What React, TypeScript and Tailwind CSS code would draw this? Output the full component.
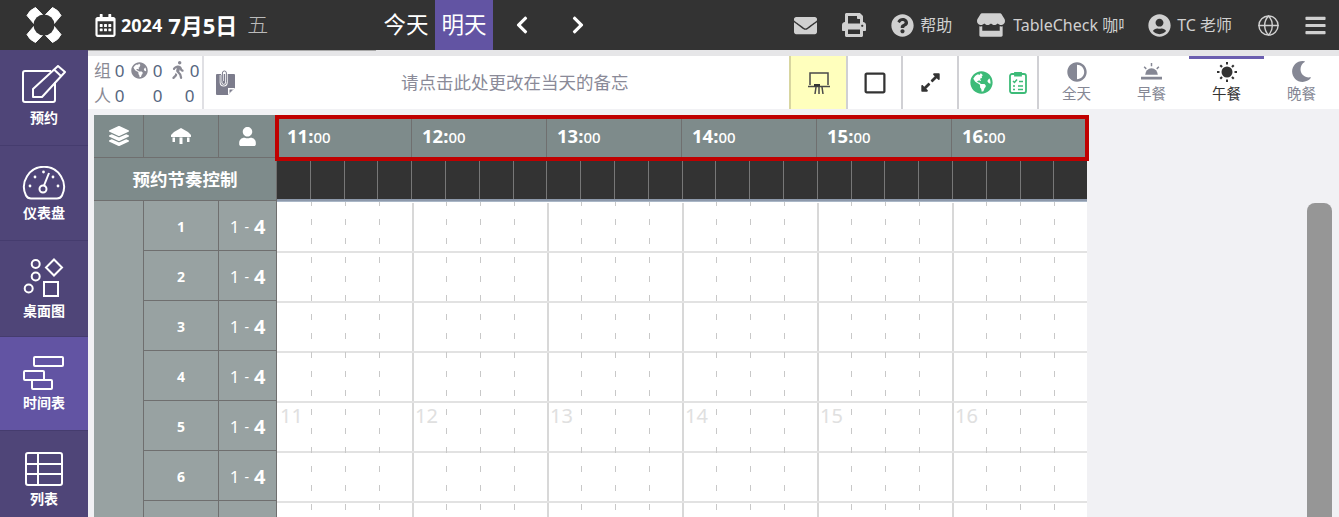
import {
  FaAdjust,
  FaBars,
  FaChevronLeft,
  FaChevronRight,
  FaEnvelope,
  FaExpandAlt,
  FaGlobeAmericas,
  FaLayerGroup,
  FaMoon,
  FaPrint,
  FaQuestionCircle,
  FaRegCalendarAlt,
  FaRegSquare,
  FaStore,
  FaUser,
  FaUserCircle,
  FaWalking,
} from 'react-icons/fa';
import { Globe } from 'lucide-react';

const HOURS = [11, 12, 13, 14, 15, 16];
const ROWS = [1, 2, 3, 4, 5, 6, 7];
const TICKS = Array.from({ length: 24 }, (_, i) => i);

function LogoMark() {
  return (
    <svg viewBox="-18 -18 36 36" className="h-[36px] w-[36px]">
      <g fill="#fff" stroke="#fff" strokeWidth="1" strokeLinejoin="round">
        <path d="M-17 -9.500Q-14.500 -15 -8.500 -17.500L-1.200 -10L-10 -1.200z" />
        <path d="M17 -9.500Q14.500 -15 8.500 -17.500L1.200 -10L10 -1.200z" />
        <path d="M-17 9.500Q-14.500 15 -8.500 17.500L-1.200 10L-10 1.200z" />
        <path d="M17 9.500Q14.500 15 8.500 17.500L1.200 10L10 1.200z" />
      </g>
      <circle cx="0" cy="0" r="10.500" fill="#333" />
    </svg>
  );
}

function NavIcon({ name }: { name: string }) {
  if (name === 'edit') {
    return (
      <svg viewBox="0 0 44 40" className="h-[40px] w-[44px]" fill="none" stroke="#fff" strokeWidth="2" strokeLinejoin="round">
        <path d="M29 6H3a2 2 0 0 0-2 2v27a2 2 0 0 0 2 2h28a2 2 0 0 0 2-2V17" />
        <path d="M11 32v-8L36 1l7 6-23 25z" />
        <path d="M32 4.500l7 6.500" />
      </svg>
    );
  }
  if (name === 'gauge') {
    return (
      <svg viewBox="0 0 44 34" className="h-[34px] w-[44px]" fill="none" stroke="#fff" strokeWidth="2">
        <path d="M9 32.500C6 32.500 5 31.500 4 29.500A20 20 0 1 1 40 29.500C39 31.500 38 32.500 35 32.500z" />
        <circle cx="21" cy="23" r="3.500" />
        <path d="M22 19.500L27 7" />
        <g fill="#fff" stroke="none">
          <circle cx="8" cy="20" r="1.400" />
          <circle cx="13" cy="11" r="1.400" />
          <circle cx="21.500" cy="6" r="1.400" />
          <circle cx="31" cy="11" r="1.400" />
          <circle cx="36" cy="20" r="1.400" />
        </g>
      </svg>
    );
  }
  if (name === 'shapes') {
    return (
      <svg viewBox="0 0 42 40" className="h-[40px] w-[42px]" fill="none" stroke="#fff" strokeWidth="2">
        <circle cx="12.700" cy="6" r="4" />
        <circle cx="12.700" cy="18.500" r="4" />
        <circle cx="5.700" cy="30.500" r="4" />
        <path d="M31 1.500l8 8-8 8-8-8z" />
        <rect x="21" y="24" width="14" height="14" />
      </svg>
    );
  }
  if (name === 'gantt') {
    return (
      <svg viewBox="0 0 42 34" className="h-[34px] w-[42px]" fill="none" stroke="#fff" strokeWidth="2">
        <rect x="11" y="1" width="29" height="9" rx="1" />
        <rect x="1" y="15" width="20" height="9" rx="1" />
        <rect x="9" y="24" width="20" height="9" rx="1" />
      </svg>
    );
  }
  return (
    <svg viewBox="0 0 38 34" className="h-[34px] w-[38px]" fill="none" stroke="#fff" strokeWidth="2">
      <rect x="1" y="1" width="36" height="32" rx="2" />
      <path d="M1 12h36M1 22h36M13 1v32" />
    </svg>
  );
}

function NavItem({ icon, label, active, className }: { icon: string; label: string; active?: boolean; className: string }) {
  return (
    <div
      className={`flex flex-col items-center justify-center gap-[5px] border-b border-[#453c6e] ${className} ${
        active ? 'bg-[#6254a3]' : 'bg-[#4f4578]'
      }`}
    >
      <NavIcon name={icon} />
      <span className="text-[14px] font-bold leading-[16px] text-white">{label}</span>
    </div>
  );
}

function MealTab({ icon, label, active }: { icon: React.ReactNode; label: string; active?: boolean }) {
  return (
    <div
      className={`flex h-full w-[75px] flex-col items-center border-t-[3px] pt-[2px] ${
        active ? 'border-[#6c5fb0] text-[#333]' : 'border-transparent text-[#858794]'
      }`}
    >
      <div className="flex h-[21px] items-center text-[20px]">{icon}</div>
      <span className="mt-[2px] text-[14.500px] leading-[18px]">{label}</span>
    </div>
  );
}

function Sunrise() {
  return (
    <svg viewBox="0 0 20 18" className="h-[19px] w-[21px]" fill="#858794">
      <path d="M4 12a6 6 0 0 1 12 0z" />
      <path d="M0 14h20v2.500H0zM9.300 1h1.400v3H9.300zM2.500 5l1-1 2 2-1 1zM17.500 5l-1-1-2 2 1 1z" />
    </svg>
  );
}

function SunDots() {
  return (
    <svg viewBox="0 0 20 20" className="h-[20px] w-[20px]" fill="#333">
      <circle cx="10" cy="10" r="5.500" />
      <path d="M9 0h2v2.500H9zM9 17.500h2V20H9zM0 9h2.500v2H0zM17.500 9H20v2h-2.500z" />
      <path d="M2.500 4l1.500-1.500L5.800 4.300 4.300 5.800zM17.500 4L16 2.500l-1.800 1.800 1.500 1.500zM2.500 16L4 17.500l1.800-1.800-1.500-1.500zM17.500 16L16 17.500l-1.800-1.800 1.500-1.500z" />
    </svg>
  );
}

function Easel() {
  return (
    <svg viewBox="0 0 22 24" className="h-[24px] w-[22px]" fill="none" stroke="#4a4a4a" strokeWidth="1.500">
      <path d="M2 14V2h18v12" />
      <path d="M0 15.500h22" />
      <path d="M8 16l-1 7M11 16v7M14 16l1 7" />
      <rect x="6" y="13" width="6" height="2.500" fill="#333" stroke="none" />
    </svg>
  );
}

function NoteClip() {
  return (
    <svg viewBox="0 0 19 25" className="h-[25px] w-[19px]">
      <path d="M1 4h17a1 1 0 0 1 1 1v13l-7 7H1a1 1 0 0 1-1-1V5a1 1 0 0 1 1-1z" fill="#7c7c8c" />
      <path d="M12 25v-7h7z" fill="#fff" />
      <path d="M13.500 23v-3.500H17z" fill="#7c7c8c" />
      <path d="M5 5v7.500a2.700 2.700 0 0 0 5.400 0V3a2 2 0 0 0-4 0v8" fill="none" stroke="#fff" strokeWidth="2.600" />
      <path d="M5 5v7.500a2.700 2.700 0 0 0 5.400 0V3a2 2 0 0 0-4 0v8" fill="none" stroke="#7c7c8c" strokeWidth="1" />
    </svg>
  );
}

function ClipboardList() {
  return (
    <svg viewBox="0 0 18 23" className="h-[23px] w-[18px]" fill="none" stroke="#3dbb78" strokeWidth="1.800">
      <rect x="1" y="3" width="16" height="19" rx="2" />
      <path d="M6 4.500V2h6v2.500z" fill="#3dbb78" />
      <path d="M4 10l1.500 1.500L8 8.500M10 10.500h4M4 15h2M9 15h5M4 18.500h2M9 18.500h5" strokeWidth="1.500" />
    </svg>
  );
}

export default function App() {
  return (
    <div className="relative h-[517px] w-[1339px] overflow-hidden bg-[#f1f1f4] font-['Noto_Sans','Noto_Sans_CJK_SC',sans-serif]">
      {/* top bar */}
      <header className="flex h-[50px] items-center bg-[#333] text-white">
        <div className="flex w-[88px] justify-center">
          <LogoMark />
        </div>
        <div className="ml-[6px] flex w-[283px] items-center">
          <FaRegCalendarAlt className="text-[23px]" />
          <span className="ml-[4px] text-[18px] font-bold">2024</span>
          <span className="ml-[6px] text-[22px] font-bold">7月5日</span>
          <span className="ml-[10px] text-[21px] font-light text-[#bbb]">五</span>
        </div>
        <span className="w-[58px] text-center text-[22.500px]">今天</span>
        <span className="flex h-full w-[58px] items-center justify-center bg-[#6254a3] text-[22.500px]">明天</span>
        <div className="ml-[19px] flex w-[76px] justify-between text-[20px]">
          <FaChevronLeft />
          <FaChevronRight />
        </div>
        <div className="ml-auto flex items-center text-[#d0d0d0]">
          <FaEnvelope className="text-[23px]" />
          <FaPrint className="ml-[25px] text-[24px]" />
          <FaQuestionCircle className="ml-[25px] text-[23px]" />
          <span className="ml-[6px] text-[16px]">帮助</span>
          <FaStore className="ml-[25px] text-[28px]" />
          <span className="ml-[8px] w-[111px] overflow-hidden whitespace-nowrap text-[16px]">TableCheck 咖啡厅</span>
          <FaUserCircle className="ml-[24px] text-[23px]" />
          <span className="ml-[6px] text-[16px]">TC 老师</span>
          <Globe className="ml-[25px] h-[23px] w-[23px]" strokeWidth={1.500} />
          <FaBars className="ml-[24px] mr-[12px] text-[23px]" />
        </div>
      </header>

      <div className="flex">
        {/* side nav */}
        <nav className="w-[88px] shrink-0">
          <NavItem icon="edit" label="预约" className="h-[96px] pb-[4px]" />
          <NavItem icon="gauge" label="仪表盘" className="h-[95px]" />
          <NavItem icon="shapes" label="桌面图" className="h-[96px]" />
          <NavItem icon="gantt" label="时间表" className="h-[94px]" active />
          <NavItem icon="table" label="列表" className="h-[96px] pt-[2px]" />
        </nav>

        <main className="min-w-0 flex-1">
          <div className="h-[6px] bg-[#e6e6e8]">
            <div className="h-px w-[288px] bg-[#a8a8a8]" />
          </div>

          {/* toolbar */}
          <div className="flex h-[53px] items-stretch bg-white">
            <div className="flex w-[116px] flex-col justify-center border-r-2 border-[#e0e0e4] pl-[6px] text-[17px] leading-[25px] text-[#8a8a94]">
              <div className="flex items-center">
                <span className="w-[20px]">组</span>
                <span className="w-[11px] text-center text-[#566680]">0</span>
                <FaGlobeAmericas className="ml-[6px] text-[17px]" />
                <span className="ml-[4px] w-[11px] text-center text-[#566680]">0</span>
                <FaWalking className="ml-[6px] text-[18px]" />
                <span className="ml-[2px] w-[11px] text-center text-[#566680]">0</span>
              </div>
              <div className="flex items-center">
                <span className="w-[20px]">人</span>
                <span className="w-[11px] text-center text-[#566680]">0</span>
                <span className="ml-[27px] w-[11px] text-center text-[#566680]">0</span>
                <span className="ml-[21px] w-[11px] text-center text-[#566680]">0</span>
              </div>
            </div>
            <div className="flex w-[585px] items-center pl-[12px]">
              <NoteClip />
              <span className="ml-[166px] text-[17.500px] text-[#8a8a98]">请点击此处更改在当天的备忘</span>
            </div>
            <div className="flex w-[59px] items-center justify-center border-x-2 border-l-[#d8d6a0] border-r-[#d0d0d4] bg-[#ffffbd]">
              <Easel />
            </div>
            <div className="flex w-[55px] items-center justify-center border-r-2 border-[#d0d0d4] text-[24px] text-[#333]">
              <FaRegSquare />
            </div>
            <div className="flex w-[56px] items-center justify-center border-r-2 border-[#d0d0d4] text-[21px] text-[#333]">
              <FaExpandAlt />
            </div>
            <div className="flex w-[80px] items-center justify-center gap-[16px] border-r-2 border-[#d0d0d4] text-[#3dbb78]">
              <FaGlobeAmericas className="text-[23px]" />
              <ClipboardList />
            </div>
            <MealTab icon={<FaAdjust className="text-[#858794]" />} label="全天" />
            <MealTab icon={<Sunrise />} label="早餐" />
            <MealTab icon={<SunDots />} label="午餐" active />
            <MealTab icon={<FaMoon className="text-[21px] text-[#858794]" />} label="晚餐" />
          </div>

          {/* schedule */}
          <div className="relative ml-[6px] mt-[6px] w-[993px]">
            <div className="flex h-[43px] border-b border-[#6f6f6f] bg-[#7e8b8b] text-white">
              <div className="flex w-[50px] items-center justify-center border-r border-[#6f6f6f] text-[20px]">
                <FaLayerGroup />
              </div>
              <div className="flex w-[75px] items-center justify-center border-r border-[#6f6f6f]">
                <svg viewBox="0 0 20 16" className="h-[16px] w-[20px]" fill="#fff">
                  <path d="M3 4L10 0l7 4 3 3v2H0V7z" />
                  <path d="M1.500 9.500H4V14H1.500zM8.500 9.500h3V16h-3zM16 9.500h2.500V14H16z" />
                </svg>
              </div>
              <div className="flex w-[58px] items-center justify-center border-r border-[#6f6f6f] text-[19px]">
                <FaUser />
              </div>
              {HOURS.map((h) => (
                <div key={h} className="w-[135px] border-r border-[#6f6f6f] pl-[10px] pt-[7px] last:border-r-0">
                  <span className="text-[18.500px] font-bold">{h}:</span>
                  <span className="text-[15px] font-medium">00</span>
                </div>
              ))}
            </div>

            <div className="flex h-[43px]">
              <div className="flex w-[183px] items-center justify-center border-b border-r border-[#6f6f6f] bg-[#7e8b8b] text-[17.500px] font-bold text-white">
                预约节奏控制
              </div>
              <div className="flex flex-1 border-b-2 border-[#8d99ab] bg-[#333]">
                {TICKS.map((t) => (
                  <div key={t} className="flex-1 border-r border-[#777] last:border-r-0" />
                ))}
              </div>
            </div>

            <div className="flex">
              <div className="w-[50px] shrink-0 border-r border-[#6f6f6f] bg-[#98a2a2]" />
              <div className="w-[133px] shrink-0">
                {ROWS.map((r) => (
                  <div key={r} className="flex h-[50px] border-b border-[#6f6f6f] bg-[#98a2a2] text-white">
                    <div className="flex w-[75px] items-center justify-center border-r border-[#6f6f6f] pt-[2px] text-[14px] font-bold">
                      {r}
                    </div>
                    <div className="flex w-[58px] items-center justify-center gap-[5px] border-r border-[#6f6f6f] pt-[2px]">
                      <span className="text-[17px]">1</span>
                      <span className="text-[14px]">-</span>
                      <span className="text-[20px] font-bold">4</span>
                    </div>
                  </div>
                ))}
              </div>
              <div className="relative flex-1 overflow-hidden border-t border-[#a9b6c6] bg-white pt-px">
                {ROWS.map((r) => (
                  <div key={r} className="flex h-[50px] border-b-2 border-[#e2e2e2] pl-[2px]">
                    {HOURS.map((h) => (
                      <div
                        key={h}
                        className="w-[135px] shrink-0 border-r-2 border-[#d8d8d8] pl-px text-[20px] leading-[26px] text-[#e0e0e0]"
                      >
                        {r === 5 ? h : ''}
                      </div>
                    ))}
                  </div>
                ))}
                {/* quarter hour ticks */}
                <div className="absolute inset-y-0 left-px right-0 flex">
                  {TICKS.map((t) => (
                    <div key={t} className="flex-1 pl-[33px]">
                      {t % 4 !== 3 && (
                        <div className="h-full w-px bg-[linear-gradient(to_bottom,#c8c8c8_6px,transparent_6px)] bg-[length:1px_19px] bg-[position:0_17px]" />
                      )}
                    </div>
                  ))}
                </div>
              </div>
            </div>

            {/* highlight around the time header */}
            <div className="absolute left-[181px] top-0 h-[46px] w-[814px] border-4 border-[#c00000]" />
          </div>
        </main>
      </div>

      {/* scrollbar thumb */}
      <div className="absolute left-[1307px] top-[203px] h-[314px] w-[25px] rounded-t-[8px] bg-[#969696]" />
    </div>
  );
}
